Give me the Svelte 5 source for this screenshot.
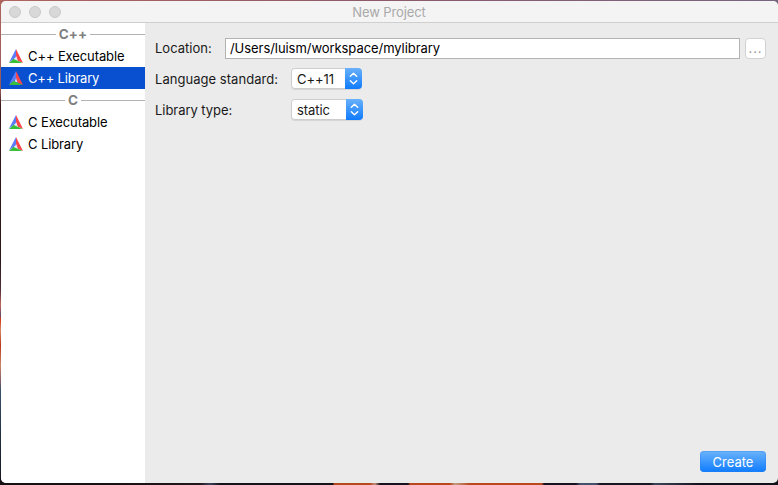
<script>
  const groups = [
    { title: 'C++', items: ['C++ Executable', 'C++ Library'] },
    { title: 'C', items: ['C Executable', 'C Library'] }
  ];
  let selected = $state('C++ Library');
  let location = $state('/Users/luism/workspace/mylibrary');
</script>

{#snippet logo()}
  <svg class="logo" width="14" height="14" viewBox="0 0 14 14">
    <path d="M7 0 7.4 8 0 13.5Z" fill="#5c7bfa" />
    <path d="M7 0 14 14 8.8 11.8 7 7Z" fill="#fc4649" />
    <path d="M0 14 4.6 9.8 13.4 14Z" fill="#38c03a" />
    <path d="M7.1 7.2 8.6 11.4 5.6 10.2Z" fill="#dfe5f5" />
  </svg>
{/snippet}

{#snippet popup(value, width)}
  <button class="popup" style:width="{width}px">
    <span>{value}</span>
    <i>
      <svg width="17" height="21" viewBox="0 0 17 21" fill="none" stroke="#fff" stroke-width="1.4" stroke-linecap="round" stroke-linejoin="round">
        <path d="M5.3 8.3 8.5 5.3l3.2 3M5.3 12.7l3.2 3 3.2-3" />
      </svg>
    </i>
  </button>
{/snippet}

<div class="desktop">
  <div class="window">
    <header>
      <div class="lights"><i></i><i></i><i></i></div>
      <h1>New Project</h1>
    </header>
    <div class="body">
      <nav>
        {#each groups as group}
          <div class="group"><b>{group.title}</b></div>
          {#each group.items as item}
            <button class="item" class:selected={item === selected} onclick={() => (selected = item)}>
              {@render logo()}<span>{item}</span>
            </button>
          {/each}
        {/each}
      </nav>
      <main>
        <div class="row location">
          <label for="location">Location:</label>
          <input id="location" bind:value={location} />
          <button class="browse">...</button>
        </div>
        <div class="row"><span class="name language">Language standard:</span>{@render popup('C++11', 71)}</div>
        <div class="row"><span class="name">Library type:</span>{@render popup('static', 72)}</div>
        <footer><button class="create">Create</button></footer>
      </main>
    </div>
  </div>
</div>

<style>
  .desktop {
    box-sizing: border-box;
    width: 778px;
    height: 485px;
    padding: 1px 0 2px 1px;
    overflow: hidden;
    background:
      linear-gradient(90deg, #b0645e, #8c5a6c 50%, #77667f) 0 0 / 100% 6px no-repeat,
      linear-gradient(90deg, #160f14 0 100px, #21171c 200px, #3c4158 210px, #16121c 220px 333px, #b4491f 334px 370px, #c3907a 375px, #17121d 380px 408px, #b8481c 410px 450px, #c39c84 455px, #b9481d 470px 542px, #171420 544px 576px, #45516a 580px 596px, #171522 600px 650px, #3b4558 655px, #12121c 700px) 0 100% / 100% 7px no-repeat,
      linear-gradient(#b0645e, #96595a 90px, #3a1718 105px, #2b1719 260px, #503037 290px, #c4675c 305px, #644a63 315px, #d83c13 320px, #d58b68 330px, #b93618 345px, #c98464 365px, #8b6069 380px, #38516a 390px, #1d2638 450px, #14151c);
    font: 13px/20px Inter, "Liberation Sans", sans-serif;
    color: #191919;
  }
  .window {
    display: flex;
    flex-direction: column;
    height: 482px;
    border-radius: 5px;
    overflow: hidden;
    background: #ebebeb;
  }
  header {
    position: relative;
    box-sizing: border-box;
    height: 22px;
    background: #f4f4f4;
    border-bottom: 1px solid #cfcfcf;
  }
  h1 {
    margin: 0;
    padding: 1px 1px 0 0;
    font-size: 13px;
    font-weight: 400;
    text-align: center;
    color: #a9a9a9;
    letter-spacing: -0.1px;
  }
  .lights {
    position: absolute;
    left: 8px;
    top: 5px;
    display: flex;
    gap: 8px;
  }
  .lights i {
    box-sizing: border-box;
    width: 12px;
    height: 12px;
    border: 1px solid #c9c9c9;
    border-radius: 50%;
    background: #d8d8d8;
  }
  .body {
    display: flex;
    flex: 1;
  }
  nav {
    width: 144px;
    background: #fff;
  }
  .group {
    display: flex;
    align-items: center;
    gap: 3px;
    height: 22px;
    color: #808080;
  }
  .group::before,
  .group::after {
    content: '';
    flex: 1;
    height: 1px;
    background: #b2b2b2;
  }
  .group b {
    font-size: 13.5px;
    font-weight: 700;
    letter-spacing: 0.1px;
  }
  button,
  input {
    margin: 0;
    border: 0;
    font: inherit;
    color: inherit;
    outline: none;
  }
  .item {
    display: flex;
    align-items: center;
    width: 144px;
    height: 22px;
    padding: 0 0 0 8px;
    gap: 5px;
    background: none;
    color: #000;
    white-space: nowrap;
    letter-spacing: -0.11px;
  }
  .item.selected {
    background: #0850d0;
    color: #fff;
    letter-spacing: -0.2px;
  }
  .logo {
    display: block;
    flex: none;
  }
  main {
    display: flex;
    flex: 1;
    flex-direction: column;
    gap: 10px;
    padding: 15px 12px 11px 10px;
  }
  .row {
    display: flex;
    align-items: center;
    height: 21px;
  }
  .row.location {
    margin-bottom: -1px;
  }
  .location label {
    width: 70px;
    padding-bottom: 1px;
  }
  input {
    box-sizing: border-box;
    width: 515px;
    height: 21px;
    padding: 0 4px 1px;
    border: 1px solid #b3b3b3;
    background: #fff;
    color: #000;
    letter-spacing: -0.06px;
  }
  .browse {
    box-sizing: border-box;
    width: 21px;
    height: 21px;
    margin-left: 5px;
    padding: 0;
    border: 1px solid #d2d2d2;
    border-radius: 4px;
    background: #fff;
    color: #999;
    line-height: 19px;
    letter-spacing: 0.9px;
  }
  .name {
    width: 136px;
    letter-spacing: -0.05px;
  }
  .name.language {
    letter-spacing: 0.04px;
  }
  .popup {
    display: flex;
    align-items: center;
    height: 21px;
    padding: 0;
    border-radius: 4px;
    background: #fff;
    box-shadow: inset 0 0 0 1px #cdcdcd, 0 1px 0 #d5d5d5;
    overflow: hidden;
    letter-spacing: -0.08px;
  }
  .popup span {
    flex: 1;
    padding-left: 6px;
    text-align: left;
  }
  .popup i {
    display: block;
    width: 17px;
    height: 21px;
    background: linear-gradient(#69b1fa, #0f7bff);
  }
  .popup svg {
    display: block;
  }
  footer {
    display: flex;
    justify-content: flex-end;
    margin-top: auto;
  }
  .create {
    width: 66px;
    height: 21px;
    padding: 0;
    border-radius: 4px;
    background: linear-gradient(#6bb3fa, #0f7cff);
    box-shadow: inset 0 0 0 1px #2a82ee55;
    color: #fff;
  }
</style>
